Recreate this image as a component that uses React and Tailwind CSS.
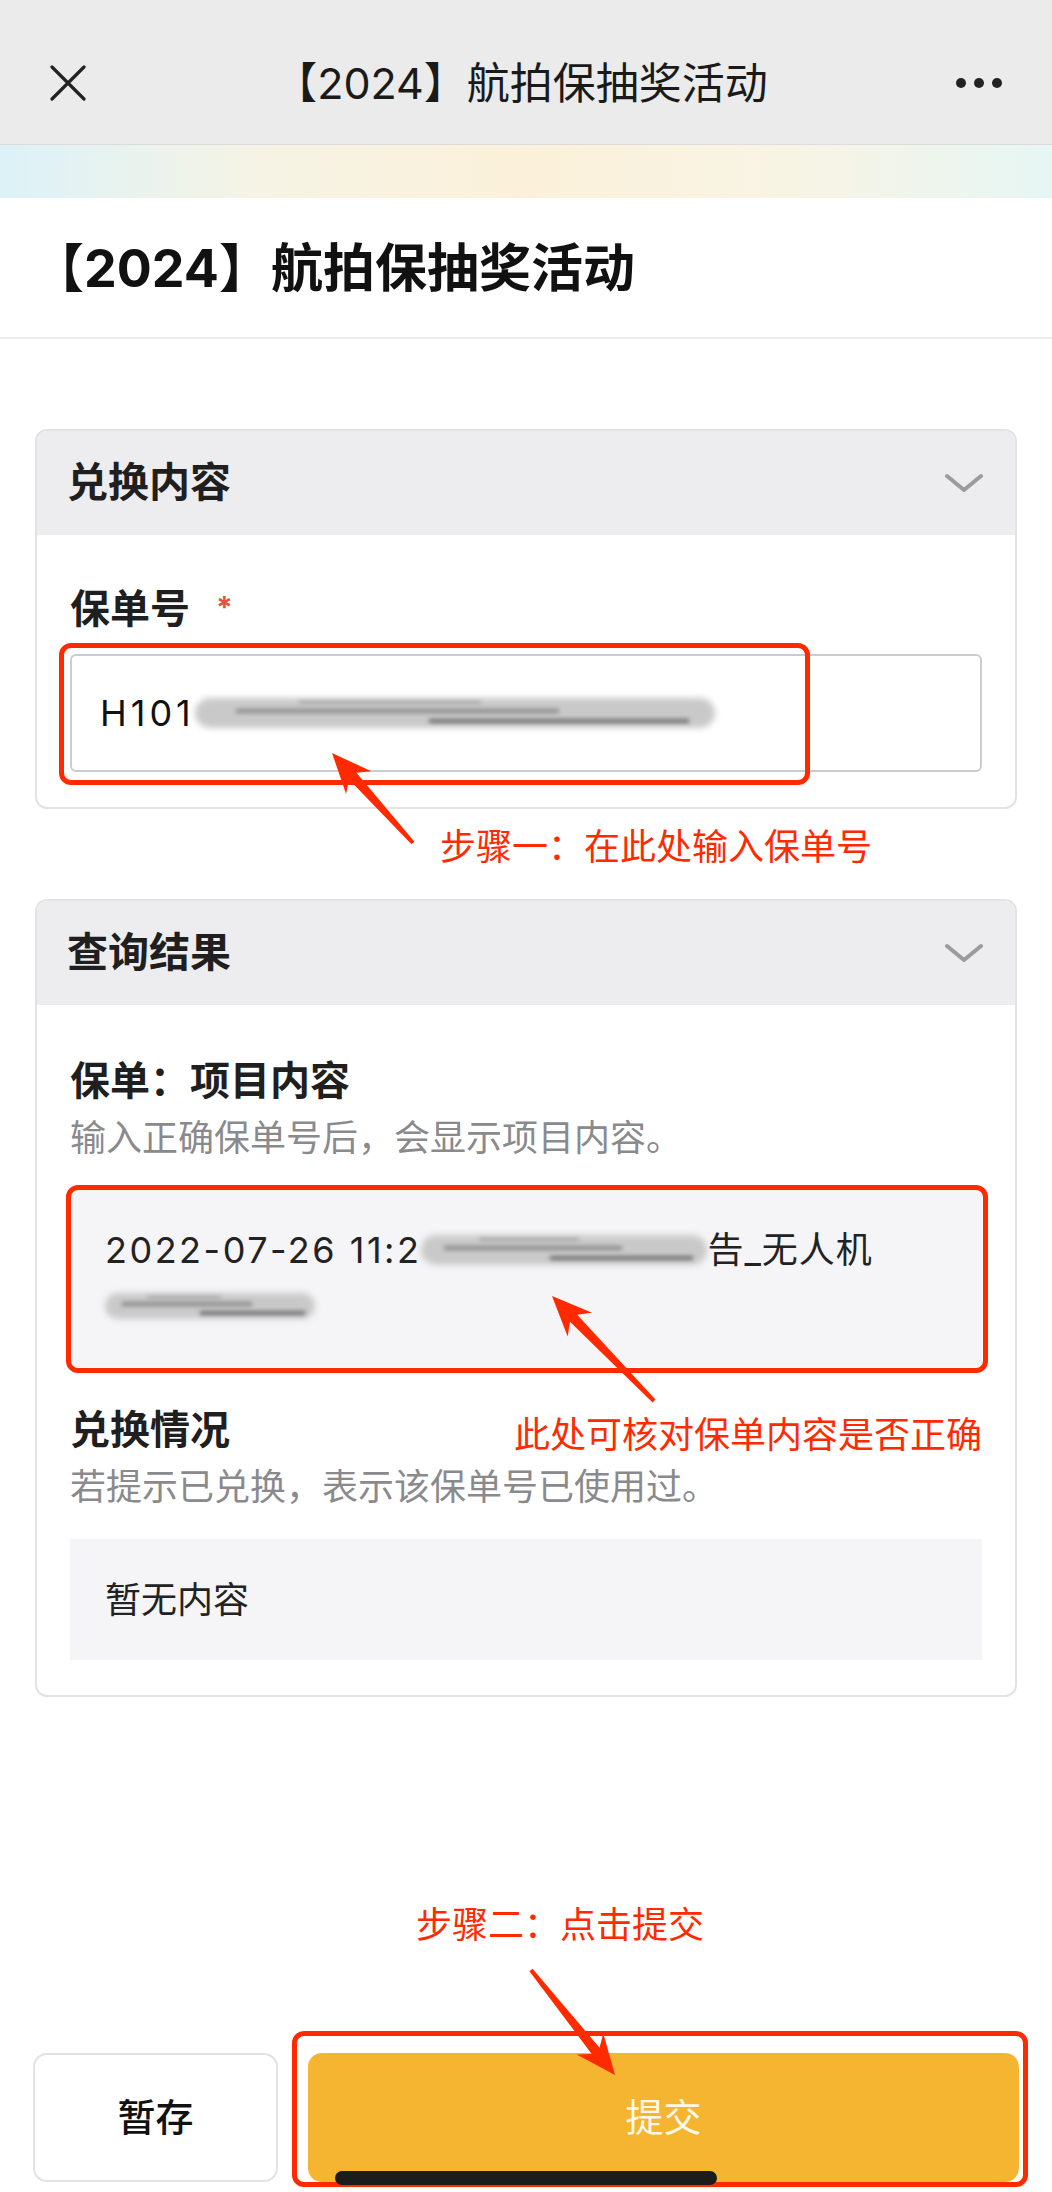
import React from "react"

const red = "#ff2a00"

const arrows = [
  { from: [413, 843], to: [332, 753] },
  { from: [654, 1401], to: [552, 1296] },
  { from: [531, 1970], to: [615, 2075] },
]

// tapered arrow with a notched head, drawn from tail to tip
function arrowPoints([x1, y1], [x2, y2]) {
  const dx = x2 - x1
  const dy = y2 - y1
  const len = Math.hypot(dx, dy)
  const ux = dx / len
  const uy = dy / len
  const nx = -uy
  const ny = ux
  const head = 40
  const half = 17
  const neck = head - 9
  const pts = [
    [x1 + nx * 2, y1 + ny * 2],
    [x2 - ux * neck + nx * 5, y2 - uy * neck + ny * 5],
    [x2 - ux * head + nx * half, y2 - uy * head + ny * half],
    [x2, y2],
    [x2 - ux * head - nx * half, y2 - uy * head - ny * half],
    [x2 - ux * neck - nx * 5, y2 - uy * neck - ny * 5],
    [x1 - nx * 2, y1 - ny * 2],
  ]
  return pts.map((p) => p.join(",")).join(" ")
}

function Chevron() {
  return (
    <svg width="38" height="20" viewBox="0 0 38 20" fill="none">
      <path d="M2 3 L19 17 L36 3" stroke="#9b9b9b" strokeWidth="4" strokeLinecap="round" strokeLinejoin="round" />
    </svg>
  )
}

function Smudge({ className }) {
  return (
    <span className={`relative inline-block align-middle ${className}`}>
      <span className="absolute inset-0 rounded-full bg-[#c9c9c9] blur-[3px]" />
      <span className="absolute left-[8%] right-[30%] top-[35%] h-[4px] bg-[#8a8a8a] blur-[2px]" />
      <span className="absolute left-[45%] right-[5%] top-[70%] h-[4px] bg-[#6f6f6f] blur-[2px]" />
      <span className="absolute left-[20%] right-[45%] top-[10%] h-[3px] bg-[#a5a5a5] blur-[2px]" />
    </span>
  )
}

function Card({ title, children }) {
  return (
    <div className="rounded-[12px] border-2 border-[#e3e3e6] overflow-hidden bg-white">
      <div className="h-[104px] bg-[#ededf0] flex items-center justify-between pl-[30px] pr-[32px]">
        <span className="text-[41px] font-bold text-[#1f1f1f]">{title}</span>
        <Chevron />
      </div>
      <div className="px-[33px] pb-[35px]">{children}</div>
    </div>
  )
}

export default function App() {
  return (
    <div className="relative w-[1052px] min-h-[2192px] bg-white flex flex-col font-['Inter','Noto_Sans_CJK_SC',sans-serif] text-[#222]">
      {/* top bar */}
      <div className="h-[145px] bg-[#ebebeb] border-b border-[#dcdcdc] flex items-center pt-[22px] px-[50px] relative">
        <svg width="36" height="36" viewBox="0 0 36 36">
          <path d="M2 2 L34 34 M34 2 L2 34" stroke="#222" strokeWidth="3.2" strokeLinecap="round" />
        </svg>
        <div className="flex-1 text-center text-[43px] text-[#1a1a1a] leading-none">【2024】航拍保抽奖活动</div>
        <div className="flex gap-[8px] items-center">
          <span className="w-[10px] h-[10px] rounded-full bg-[#222]" />
          <span className="w-[10px] h-[10px] rounded-full bg-[#222]" />
          <span className="w-[10px] h-[10px] rounded-full bg-[#222]" />
        </div>
      </div>
      <div className="h-[53px] bg-[linear-gradient(90deg,#dcf2f8_0%,#f6f3e4_25%,#fbf1da_50%,#f8f4e4_75%,#e6f6f4_100%)]" />

      <div className="h-[141px] border-b-2 border-[#ececec] flex items-center pl-[32px] pt-[3px]">
        <h1 className="text-[52px] font-bold text-[#111] leading-none">【2024】航拍保抽奖活动</h1>
      </div>

      <div className="px-[35px] pt-[90px] flex flex-col gap-[90px]">
        <Card title="兑换内容">
          <div className="pt-[46px] flex items-start">
            <span className="text-[40px] font-semibold text-[#1f1f1f] leading-[56px]">保单号</span>
            <span className="ml-[26px] mt-[6px] text-[30px] font-bold text-[#e2553c] leading-[40px]">*</span>
          </div>
          <div className="mt-[17px] h-[118px] rounded-[6px] border-2 border-[#c9ccd2] flex items-center pl-[28px] text-[36px] text-[#111]">
            <span className="tracking-[4px]">H101</span>
            <Smudge className="w-[520px] h-[30px]" />
          </div>
        </Card>

        <Card title="查询结果">
          <div className="pt-[48px] text-[40px] font-semibold text-[#1f1f1f] leading-[56px]">保单：项目内容</div>
          <div className="mt-[4px] text-[36px] text-[#8a8a8d] leading-[50px]">输入正确保单号后，会显示项目内容。</div>
          <div className="mt-[26px] h-[178px] bg-[#f5f5f7] pl-[35px] pt-[33px] text-[36px] text-[#222] leading-[56px]">
            <div className="flex items-center whitespace-nowrap">
              <span className="tracking-[2.5px]">2022-07-26 11:2</span>
              <Smudge className="w-[286px] h-[30px]" />
              <span className="tracking-[1px]">告_无人机</span>
            </div>
            <div className="h-[56px] flex items-center">
              <Smudge className="w-[210px] h-[26px]" />
            </div>
          </div>
          <div className="mt-[35px] text-[40px] font-semibold text-[#1f1f1f] leading-[56px]">兑换情况</div>
          <div className="mt-[4px] text-[36px] text-[#8a8a8d] leading-[50px]">若提示已兑换，表示该保单号已使用过。</div>
          <div className="mt-[27px] h-[121px] bg-[#f5f5f7] pl-[35px] flex items-center text-[36px] text-[#222]">暂无内容</div>
        </Card>
      </div>

      <div className="mt-auto px-[33px] pb-[10px] flex gap-[30px]">
        <button type="button" className="w-[245px] h-[129px] rounded-[14px] border-2 border-[#e2e2e2] bg-white text-[38px] font-medium text-[#111]">
          暂存
        </button>
        <button type="button" className="flex-1 h-[129px] rounded-[14px] bg-[#f5b531] text-[38px] text-[#fff8ea]">
          提交
        </button>
      </div>

      {/* annotations drawn over the screenshot */}
      <div className="absolute left-[59px] top-[643px] w-[751px] h-[142px] border-[5px] border-[#ff2a00] rounded-[12px]" />
      <div className="absolute left-[66px] top-[1185px] w-[922px] h-[188px] border-[5px] border-[#ff2a00] rounded-[12px]" />
      <div className="absolute left-[292px] top-[2031px] w-[736px] h-[156px] border-[5px] border-[#ff2a00] rounded-[12px]" />

      <div className="absolute left-[440px] top-[827px] text-[36px] leading-[40px] text-[#ff2a00] whitespace-nowrap">步骤一：在此处输入保单号</div>
      <div className="absolute left-[514px] top-[1415px] text-[36px] leading-[40px] text-[#ff2a00] whitespace-nowrap">此处可核对保单内容是否正确</div>
      <div className="absolute left-[416px] top-[1905px] text-[36px] leading-[40px] text-[#ff2a00] whitespace-nowrap">步骤二：点击提交</div>

      <svg className="absolute left-0 top-0 pointer-events-none" width="1052" height="2192" viewBox="0 0 1052 2192">
        {arrows.map((a, i) => (
          <polygon key={i} points={arrowPoints(a.from, a.to)} fill={red} />
        ))}
      </svg>

      <div className="absolute left-[335px] top-[2171px] w-[382px] h-[14px] rounded-full bg-[#1c1c1c]" />
    </div>
  )
}
